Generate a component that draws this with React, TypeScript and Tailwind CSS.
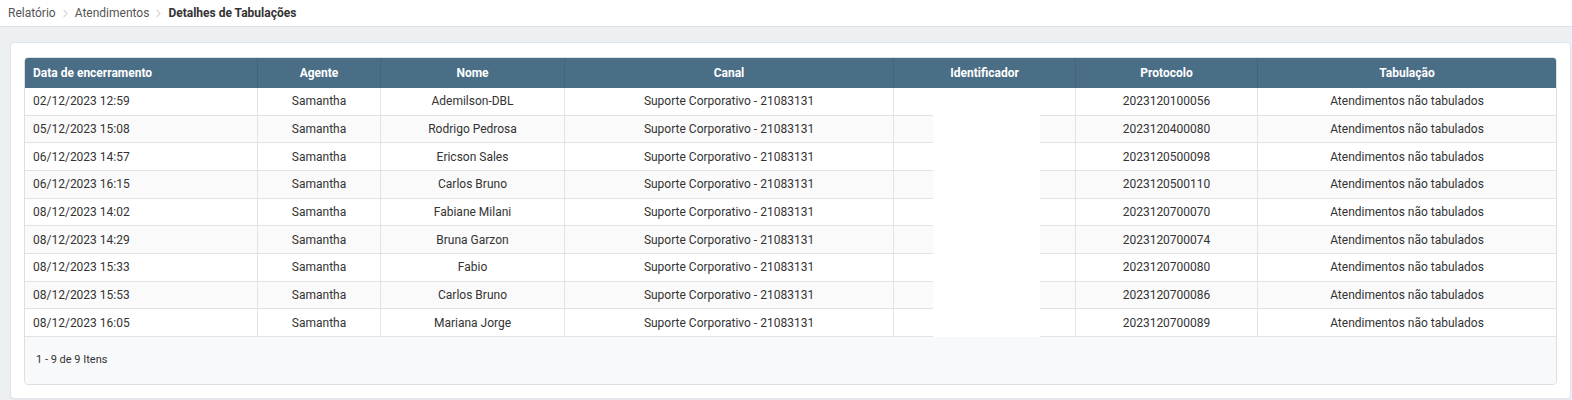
import { ChevronRight } from "lucide-react";

type Row = { data: string; agente: string; nome: string; canal: string; protocolo: string; tabulacao: string };

const ROWS: Row[] = [
  ["02/12/2023 12:59", "Ademilson-DBL", "2023120100056"],
  ["05/12/2023 15:08", "Rodrigo Pedrosa", "2023120400080"],
  ["06/12/2023 14:57", "Ericson Sales", "2023120500098"],
  ["06/12/2023 16:15", "Carlos Bruno", "2023120500110"],
  ["08/12/2023 14:02", "Fabiane Milani", "2023120700070"],
  ["08/12/2023 14:29", "Bruna Garzon", "2023120700074"],
  ["08/12/2023 15:33", "Fabio", "2023120700080"],
  ["08/12/2023 15:53", "Carlos Bruno", "2023120700086"],
  ["08/12/2023 16:05", "Mariana Jorge", "2023120700089"],
].map(([data, nome, protocolo]) => ({
  data,
  agente: "Samantha",
  nome,
  canal: "Suporte Corporativo - 21083131",
  protocolo,
  tabulacao: "Atendimentos não tabulados",
}));

// column widths measured off the reference, px
const COLS = [
  { label: "Data de encerramento", w: "w-[233px]", align: "justify-start pl-[8px]" },
  { label: "Agente", w: "w-[123px]", align: "justify-center" },
  { label: "Nome", w: "w-[184px]", align: "justify-center" },
  { label: "Canal", w: "w-[329px]", align: "justify-center" },
  { label: "Identificador", w: "w-[182px]", align: "justify-center" },
  { label: "Protocolo", w: "w-[182px]", align: "justify-center" },
  { label: "Tabulação", w: "flex-1", align: "justify-center" },
];

function cells(r: Row) {
  return [r.data, r.agente, r.nome, r.canal, "", r.protocolo, r.tabulacao];
}

export default function App() {
  return (
    <div className="h-[400px] w-full bg-[#edf0f3] font-['Roboto',sans-serif] text-[#333]">
      <div className="flex h-[27px] items-center gap-[3px] border-b border-[#dde1e6] bg-white pl-[8px] text-[12px]">
        <span className="text-[#555]">Relatório</span>
        <ChevronRight className="size-[13px] text-[#aaa]" strokeWidth={1.5} />
        <span className="text-[#555]">Atendimentos</span>
        <ChevronRight className="size-[13px] text-[#aaa]" strokeWidth={1.5} />
        <span className="font-bold text-[#333]">Detalhes de Tabulações</span>
      </div>

      <div className="ml-[10px] mr-[1px] mt-[15px] h-[357px] rounded-[4px] border border-[#e1e4e8] bg-white px-[13px] pt-[14px] shadow-[0_1px_2px_rgba(0,0,0,0.04)]">
        <div className="relative overflow-hidden rounded-[4px] border border-[#dcdfe3]">
          <div className="flex h-[30px] bg-[#4a6e86] text-[12px] font-bold text-white">
            {COLS.map((c, i) => (
              <div
                key={c.label}
                className={`flex items-center ${c.w} ${c.align} ${i < COLS.length - 1 ? "border-r border-[#42657b]" : ""}`}
              >
                {c.label}
              </div>
            ))}
          </div>
          {ROWS.map((r, ri) => (
            <div
              key={ri}
              className={`flex h-[27.67px] border-b border-[#e3e3e3] text-[12px] ${ri % 2 ? "bg-[#fafafa]" : "bg-white"}`}
            >
              {cells(r).map((v, i) => (
                <div
                  key={i}
                  className={`flex items-center ${COLS[i].w} ${COLS[i].align} ${i < COLS.length - 1 ? "border-r border-[#e3e3e3]" : ""}`}
                >
                  {v}
                </div>
              ))}
            </div>
          ))}
          <div className="flex h-[47px] items-center bg-[#f8f9fa] pl-[11px] text-[11px] text-[#333]">1 - 9 de 9 Itens</div>

          {/* redacted identifier block */}
          <div className="absolute left-[908px] top-[55px] h-[224px] w-[107px] bg-white" />
        </div>
      </div>
    </div>
  );
}
